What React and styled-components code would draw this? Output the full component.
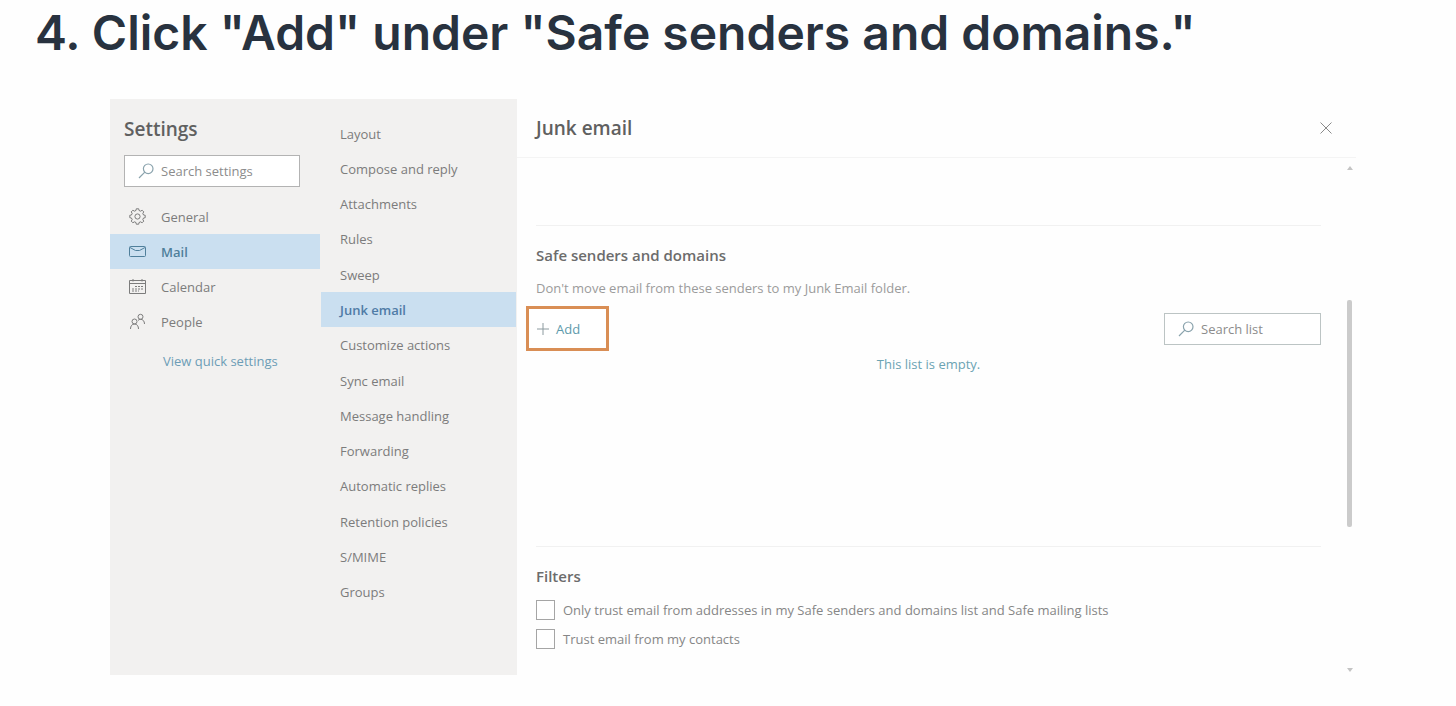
import React from "react";
import styled, { createGlobalStyle } from "styled-components";

const GlobalStyle = createGlobalStyle`
  * {
    box-sizing: border-box;
  }
  body {
    margin: 0;
    background: #fefefe;
    font-family: "Open Sans", "Noto Sans", sans-serif;
    font-size: 13px;
    line-height: 20px;
    color: #7c7c7c;
  }
  h1, h2, h3, p, ul {
    margin: 0;
    padding: 0;
  }
  button, input {
    font: inherit;
  }
`;

const navItems = [
    { label: "General", icon: "gear" },
    { label: "Mail", icon: "mail", active: true },
    { label: "Calendar", icon: "calendar" },
    { label: "People", icon: "people" },
];

const sections = [
    "Layout",
    "Compose and reply",
    "Attachments",
    "Rules",
    "Sweep",
    "Junk email",
    "Customize actions",
    "Sync email",
    "Message handling",
    "Forwarding",
    "Automatic replies",
    "Retention policies",
    "S/MIME",
    "Groups",
];

const Step = styled.article`
  padding: 0 100px 24px 110px;
`;

const StepTitle = styled.h1`
  margin-left: -75px;
  padding: 3px 0 36px;
  font-family: Inter, sans-serif;
  font-size: 48px;
  font-weight: 600;
  line-height: 60px;
  white-space: nowrap;
  color: #28323f;
`;

const Window = styled.div`
  display: flex;
`;

const Sidebar = styled.aside`
  flex: none;
  width: 210px;
  background: #f2f1f0;
`;

const SidebarTop = styled.div`
  padding: 18px 20px 12px 14px;
`;

const Title = styled.h2`
  font-size: 19px;
  font-weight: 600;
  line-height: 24px;
  color: #606060;
`;

const SearchBox = styled.label`
  display: flex;
  align-items: center;
  gap: 6px;
  width: ${(props) => props.$width};
  height: 32px;
  padding-left: 12px;
  background: #fff;
  border: 1px solid ${(props) => props.$border};

  svg {
    flex: none;
    color: #8aa3ad;
  }

  input {
    flex: 1;
    min-width: 0;
    padding: 0;
    border: 0;
    outline: 0;
    background: none;
  }

  input::placeholder {
    color: #8c8c8c;
    opacity: 1;
  }
`;

const SidebarSearch = styled(SearchBox)`
  margin-top: 14px;
`;

const Menu = styled.ul`
  list-style: none;
`;

const NavLink = styled.a`
  display: flex;
  align-items: center;
  gap: 15px;
  height: 35px;
  padding-left: 19px;
  text-decoration: none;
  font-weight: ${(props) => (props.$active ? 600 : 400)};
  color: ${(props) => (props.$active ? "#4f7f9b" : "#7c7c7c")};
  background: ${(props) => (props.$active ? "#cadff0" : "transparent")};
`;

const QuickLink = styled.a`
  display: block;
  padding: 12px 0 0 53px;
  text-decoration: none;
  color: #6d9db6;
`;

const SectionNav = styled.nav`
  flex: none;
  width: 197px;
  display: flex;
  padding: 17px 1px 65px;
  background: #f2f1f0;
`;

const SectionMenu = styled(Menu)`
  flex: 1;
  display: flex;
  flex-direction: column;
  justify-content: space-between;
`;

const SectionLink = styled(NavLink)`
  color: ${(props) => (props.$active ? "#4f7ba6" : "#7c7c7c")};
`;

const Main = styled.main`
  flex: 1;
  min-width: 0;
`;

const Header = styled.header`
  display: flex;
  align-items: center;
  justify-content: space-between;
  height: 59px;
  padding: 0 20px 0 19px;
  border-bottom: 1px solid #f4f4f4;
`;

const CloseButton = styled.button`
  display: flex;
  padding: 4px;
  border: 0;
  background: none;
  color: #8a8a8a;
`;

const Body = styled.div`
  display: flex;
`;

const Content = styled.div`
  flex: 1;
  padding: 67px 22px 26px 19px;
`;

const Section = styled.section`
  padding-top: 19px;
  border-top: 1px solid #f1f1f1;
`;

const SafeSenders = styled(Section)`
  min-height: 321px;
`;

const Heading = styled.h3`
  font-size: 15px;
  font-weight: 600;
  line-height: 20px;
  color: #6c6c6c;
`;

const Hint = styled.p`
  margin-top: 13px;
  color: #9b9b9b;
`;

const Toolbar = styled.div`
  display: flex;
  align-items: center;
  justify-content: space-between;
  margin: 8px 0 0 -10px;
`;

const AddButton = styled.button`
  display: flex;
  align-items: center;
  gap: 7px;
  width: 83px;
  height: 45px;
  padding: 0 8px;
  border: 3px solid #d98e55;
  background: #fff;
  color: #5d9aab;

  svg {
    color: #8c9a9f;
  }
`;

const Empty = styled.p`
  margin-top: 3px;
  text-align: center;
  color: #6ba3b3;
`;

const Option = styled.label`
  display: flex;
  align-items: center;
  gap: 8px;
  margin-top: ${(props) => (props.$first ? "14px" : "9px")};
  color: #868686;

  input {
    appearance: none;
    flex: none;
    width: 19px;
    height: 20px;
    margin: 0;
    border: 1px solid #a5a5a5;
    background: #fff;
  }

  input:checked {
    background: #5d9aab;
  }
`;

const ScrollTrack = styled.div`
  flex: 0 0 13px;
  display: flex;
  flex-direction: column;
  align-items: center;
  padding: 8px 0 3px;
`;

const ScrollThumb = styled.div`
  width: 5px;
  height: 227px;
  margin: 130px 0 auto;
  border-radius: 2px;
  background: #cbcbcb;
`;

const Arrow = styled.svg`
  width: 6px;
  height: 4px;
  fill: #c4c4c4;
`;

const SearchIcon = () => (
    <svg width="18" height="18" viewBox="0 0 18 18" fill="none" stroke="currentColor" strokeWidth="1.2">
        <circle cx="11.2" cy="6.8" r="4.8" />
        <path d="M7.8 10.2 2 16" />
    </svg>
);

// outline of a cog with eight teeth
const gearPoints = Array.from({ length: 8 }, (_, i) =>
    [
        [-9, 7.8],
        [9, 7.8],
        [14, 6.2],
        [31, 6.2],
    ]
        .map(([offset, radius]) => {
            const angle = ((i * 45 + offset) * Math.PI) / 180;
            return `${(8.5 + radius * Math.sin(angle)).toFixed(2)},${(8.5 - radius * Math.cos(angle)).toFixed(2)}`;
        })
        .join(" ")
).join(" ");

const iconShapes = {
    gear: (
        <>
            <polygon points={gearPoints} />
            <circle cx="8.5" cy="8.5" r="2.6" />
        </>
    ),
    mail: (
        <>
            <rect x=".5" y="3.5" width="16" height="10" rx="1" />
            <path d="M1 4.500 6.500 7.500h4L16 4.500" />
        </>
    ),
    calendar: (
        <>
            <path d="M.5 2.500h16v13H.5zM.5 5.500h16M4 1v2.500M13 1v2.500" />
            <path d="M6 8.500h8M3 11h11M3 13h7" strokeDasharray="2 1" />
        </>
    ),
    people: (
        <>
            <circle cx="5.500" cy="8.500" r="2.500" />
            <path d="M1.500 16c0-3 1.500-5 4-5s4 2 4 5" />
            <circle cx="11.500" cy="3.800" r="2.500" />
            <path d="M9 7.500c.7-.8 1.500-1.200 2.500-1.200 2.300 0 4 1.700 4 4.700" />
        </>
    ),
};

const NavIcon = ({ name }) => (
    <svg width="17" height="17" viewBox="0 0 17 17" fill="none" stroke="currentColor" strokeWidth="1">
        {iconShapes[name]}
    </svg>
);

const App = () => {
    return (
        <Step>
            <GlobalStyle />
            <StepTitle>4. Click "Add" under "Safe senders and domains."</StepTitle>
            <Window>
                <Sidebar>
                    <SidebarTop>
                        <Title>Settings</Title>
                        <SidebarSearch $width="100%" $border="#b3b3b3">
                            <SearchIcon />
                            <input type="text" aria-label="Search settings" placeholder="Search settings" />
                        </SidebarSearch>
                    </SidebarTop>
                    <Menu>
                        {navItems.map((item) => (
                            <li key={item.label}>
                                <NavLink href="#" $active={item.active}>
                                    <NavIcon name={item.icon} />
                                    {item.label}
                                </NavLink>
                            </li>
                        ))}
                    </Menu>
                    <QuickLink href="#">View quick settings</QuickLink>
                </Sidebar>
                <SectionNav>
                    <SectionMenu>
                        {sections.map((name) => (
                            <li key={name}>
                                <SectionLink href="#" $active={name === "Junk email"}>
                                    {name}
                                </SectionLink>
                            </li>
                        ))}
                    </SectionMenu>
                </SectionNav>
                <Main>
                    <Header>
                        <Title>Junk email</Title>
                        <CloseButton type="button" aria-label="Close">
                            <svg width="12" height="12" viewBox="0 0 12 12" fill="none" stroke="currentColor">
                                <path d="M.5.5l11 11M11.500.5l-11 11" />
                            </svg>
                        </CloseButton>
                    </Header>
                    <Body>
                        <Content>
                            <SafeSenders>
                                <Heading>Safe senders and domains</Heading>
                                <Hint>Don't move email from these senders to my Junk Email folder.</Hint>
                                <Toolbar>
                                    <AddButton type="button">
                                        <svg width="12" height="12" viewBox="0 0 12 12" fill="none" stroke="currentColor">
                                            <path d="M6 0v12M0 6h12" />
                                        </svg>
                                        Add
                                    </AddButton>
                                    <SearchBox $width="157px" $border="#bcc4c4">
                                        <SearchIcon />
                                        <input type="text" aria-label="Search list" placeholder="Search list" />
                                    </SearchBox>
                                </Toolbar>
                                <Empty>This list is empty.</Empty>
                            </SafeSenders>
                            <Section>
                                <Heading>Filters</Heading>
                                <Option $first>
                                    <input type="checkbox" />
                                    Only trust email from addresses in my Safe senders and domains list and Safe mailing lists
                                </Option>
                                <Option>
                                    <input type="checkbox" />
                                    Trust email from my contacts
                                </Option>
                            </Section>
                        </Content>
                        <ScrollTrack>
                            <Arrow viewBox="0 0 6 4">
                                <path d="M3 0l3 4H0z" />
                            </Arrow>
                            <ScrollThumb />
                            <Arrow viewBox="0 0 6 4">
                                <path d="M0 0h6L3 4z" />
                            </Arrow>
                        </ScrollTrack>
                    </Body>
                </Main>
            </Window>
        </Step>
    );
};

export default App;
